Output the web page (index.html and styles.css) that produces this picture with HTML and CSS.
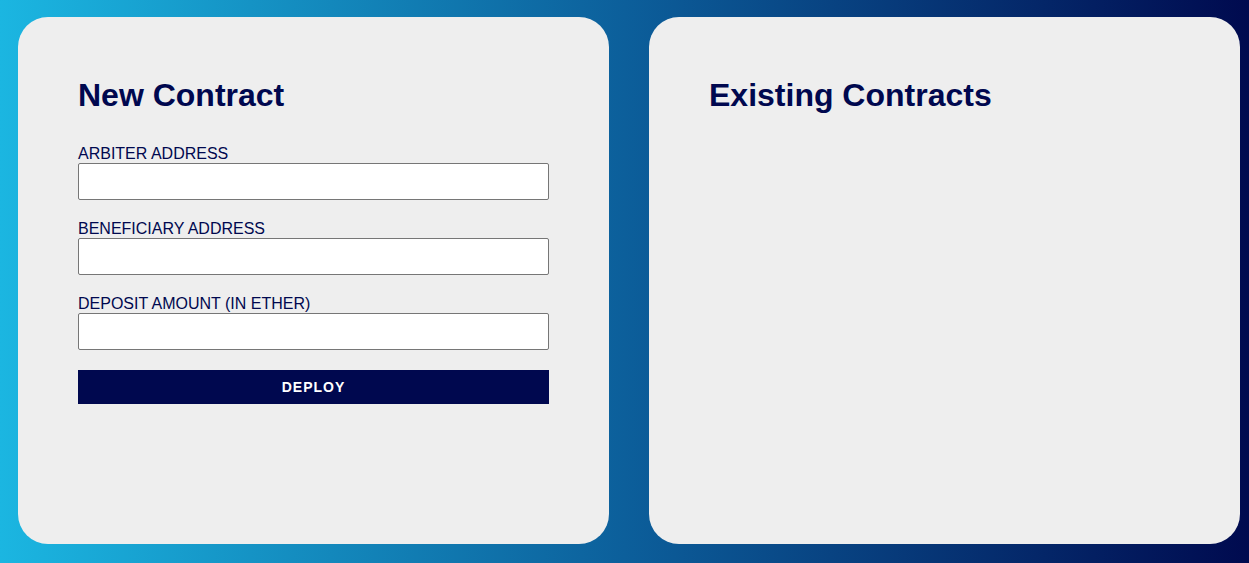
FILE: index.html
```html
<!DOCTYPE html>
<html>
<head>
<meta charset="utf-8">
<link rel="stylesheet" href="styles.css">
</head>
<body>
<div class="page">
  <div class="card">
    <h1 class="title">New Contract</h1>
    <label class="field">
      <span class="label">ARBITER ADDRESS</span>
      <input class="input" type="text">
    </label>
    <label class="field">
      <span class="label">BENEFICIARY ADDRESS</span>
      <input class="input" type="text">
    </label>
    <label class="field">
      <span class="label">DEPOSIT AMOUNT (IN ETHER)</span>
      <input class="input" type="text">
    </label>
    <button class="deploy">DEPLOY</button>
  </div>
  <div class="card">
    <h1 class="title">Existing Contracts</h1>
  </div>
</div>
</body>
</html>
```
FILE: styles.css
```css
html, body {
  margin: 0;
  padding: 0;
  height: 100%;
}
body {
  font-family: "Liberation Sans", Arial, sans-serif;
  background: linear-gradient(to right, #1bb6e1 0%, #0c5f9b 50%, #000a4f 100%);
}
.page {
  display: flex;
  gap: 40px;
  padding: 17px 9px 19px 18px;
  height: 100%;
  box-sizing: border-box;
}
.card {
  flex: 0 0 591px;
  height: 527px;
  box-sizing: border-box;
  background: #eeeeee;
  border-radius: 30px;
  padding: 60px 60px 0 60px;
  display: flex;
  flex-direction: column;
}
.title {
  margin: 0 0 31px 0;
  font-size: 32px;
  font-weight: bold;
  color: #00084f;
  line-height: 37px;
}
.field {
  display: flex;
  flex-direction: column;
  margin-bottom: 20px;
}
.label {
  font-size: 16px;
  line-height: 18px;
  color: #00084f;
  margin-bottom: 0;
}
.input {
  height: 37px;
  box-sizing: border-box;
  border: 1px solid #767676;
  border-radius: 2px;
  background: #ffffff;
  margin: 0;
}
.deploy {
  margin-top: 0;
  height: 34px;
  border: none;
  background: #00084f;
  color: #ffffff;
  font-family: "Liberation Sans", Arial, sans-serif;
  font-weight: bold;
  font-size: 14px;
  letter-spacing: 1px;
  cursor: pointer;
}
```
